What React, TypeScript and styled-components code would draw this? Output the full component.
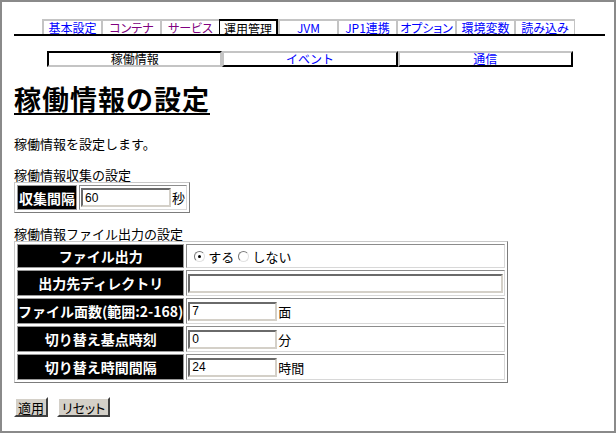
import React, { useState } from 'react';
import styled, { createGlobalStyle, css } from 'styled-components';

const GlobalStyle = createGlobalStyle`
  html, body {
    margin: 0;
    padding: 0;
    background: #fff;
  }
`;

const JP = `"Noto Sans CJK JP", "Liberation Sans", sans-serif`;

const Frame = styled.div`
  width: 616px;
  height: 433px;
  box-sizing: border-box;
  border: 2px solid #8a8a8a;
  padding: 17px 9px 0 12px;
  font-family: ${JP};
  font-size: 13px;
  color: #000;
  background: #fff;
`;

const TabBar = styled.div`
  display: flex;
  padding-left: 28px;
  height: 15px;
  border-bottom: 2px solid #000;
`;

const Tab = styled.a<{ $active?: boolean; $visited?: boolean }>`
  width: 59px;
  height: 15px;
  box-sizing: border-box;
  display: flex;
  align-items: center;
  justify-content: center;
  font-size: 12px;
  line-height: 1;
  white-space: nowrap;
  font-feature-settings: "palt";
  text-decoration: none;
  border-top: 2px solid #c4c4c4;
  border-left: 2px solid #c4c4c4;
  color: ${(p) => (p.$visited ? '#800080' : '#0000ff')};
  cursor: pointer;
  ${(p) =>
    p.$active &&
    css`
      color: #000;
      border-top-color: #000;
      border-left: 1px solid #000;
      border-right: 2px solid #000;
      height: 17px;
      margin-bottom: -2px;
    `}
  &:last-child {
    width: 61px;
    border-right: 1px solid #c4c4c4;
  }
`;

const SubTabBar = styled.div`
  display: flex;
  width: 526px;
  margin: 15px 0 0 33px;
`;

const SubTab = styled.a<{ $active?: boolean }>`
  flex: 1;
  height: 16px;
  box-sizing: border-box;
  display: flex;
  align-items: center;
  justify-content: center;
  font-size: 12px;
  line-height: 1;
  text-decoration: none;
  border: 2px solid;
  border-color: #c4c4c4 #000 #000 #c4c4c4;
  color: #0000ff;
  cursor: pointer;
  ${(p) =>
    p.$active &&
    css`
      color: #000;
      border-color: #000 #c4c4c4 #c4c4c4 #000;
    `}
`;

const Heading = styled.h1`
  margin: 16px 0 0;
  font-size: 27px;
  line-height: 32px;
  letter-spacing: 1px;
  font-weight: bold;
  text-decoration: underline;
  text-underline-offset: 3px;
`;

const Text = styled.p<{ $top: number }>`
  margin: ${(p) => p.$top}px 0 0;
  font-size: 13px;
  line-height: 14px;
`;

const FormTable = styled.table<{ $width?: number }>`
  border-collapse: separate;
  border-spacing: 2px;
  border: 1px solid;
  border-color: #c8c8c8 #7c7c7c #7c7c7c #c8c8c8;
  ${(p) => p.$width && `width: ${p.$width}px;`}
`;

const Label = styled.th<{ $width: number; $height: number }>`
  width: ${(p) => p.$width}px;
  height: ${(p) => p.$height}px;
  box-sizing: border-box;
  padding: 0;
  background: #000;
  color: #fff;
  font-size: 14px;
  font-weight: bold;
  white-space: nowrap;
  text-align: center;
  border: 1px solid #9a9a9a;
`;

const Cell = styled.td`
  padding: 1px 1px;
  border: 1px solid;
  border-color: #8c8c8c #d8d8d8 #d8d8d8 #8c8c8c;
  white-space: nowrap;
`;

const Field = styled.div`
  display: flex;
  align-items: center;
  gap: 1px;
`;

const TextInput = styled.input<{ $width: number }>`
  width: ${(p) => p.$width}px;
  height: 19px;
  box-sizing: border-box;
  padding: 0 2px;
  border: 2px solid;
  border-color: #6a6a6a #d4d0c8 #d4d0c8 #6a6a6a;
  font-family: "Liberation Sans", sans-serif;
  font-size: 12px;
  outline: none;
`;

const Unit = styled.span`
  font-size: 13px;
  line-height: 1;
`;

const RadioGroup = styled.div`
  display: flex;
  align-items: center;
  padding-left: 6px;
  font-size: 13px;
  height: 20px;
`;

const RadioOption = styled.label`
  display: flex;
  align-items: center;
  gap: 3px;
  margin-right: 4px;
  cursor: pointer;
`;

const RadioDot = styled.span<{ $checked: boolean }>`
  width: 11px;
  height: 11px;
  box-sizing: border-box;
  border-radius: 50%;
  border: 1px solid;
  border-color: #7a7a7a #e2e2e2 #e2e2e2 #7a7a7a;
  background: #fff;
  display: flex;
  align-items: center;
  justify-content: center;
  &::after {
    content: '';
    width: 3px;
    height: 3px;
    border-radius: 50%;
    background: ${(p) => (p.$checked ? '#000' : 'transparent')};
  }
`;

const ButtonRow = styled.div`
  display: flex;
  gap: 9px;
  margin-top: 14px;
`;

const Button = styled.button<{ $width: number }>`
  width: ${(p) => p.$width}px;
  height: 20px;
  box-sizing: border-box;
  padding: 0;
  background: #d4d0c8;
  border: 2px solid;
  border-color: #fff #404040 #404040 #fff;
  font-family: ${JP};
  font-size: 13px;
  line-height: 1;
  white-space: nowrap;
  font-feature-settings: "palt";
  color: #000;
  cursor: pointer;
`;

const tabs = [
  { label: '基本設定' },
  { label: 'コンテナ', visited: true },
  { label: 'サービス', visited: true },
  { label: '運用管理', active: true },
  { label: 'JVM' },
  { label: 'JP1連携' },
  { label: 'オプション' },
  { label: '環境変数' },
  { label: '読み込み' },
];

const subTabs = ['稼働情報', 'イベント', '通信'];

export default function App() {
  const [interval, setInterval] = useState('60');
  const [output, setOutput] = useState(true);
  const [dir, setDir] = useState('');
  const [files, setFiles] = useState('7');
  const [base, setBase] = useState('0');
  const [span, setSpan] = useState('24');

  return (
    <>
      <GlobalStyle />
      <Frame>
        <TabBar>
          {tabs.map((t) => (
            <Tab key={t.label} $active={t.active} $visited={t.visited}>
              {t.label}
            </Tab>
          ))}
        </TabBar>
        <SubTabBar>
          {subTabs.map((s, i) => (
            <SubTab key={s} $active={i === 0}>
              {s}
            </SubTab>
          ))}
        </SubTabBar>

        <Heading>稼働情報の設定</Heading>
        <Text $top={22}>稼働情報を設定します。</Text>

        <Text $top={17}>稼働情報収集の設定</Text>
        <FormTable>
          <tbody>
            <tr>
              <Label $width={60} $height={25}>収集間隔</Label>
              <Cell>
                <Field>
                  <TextInput $width={90} value={interval} onChange={(e) => setInterval(e.target.value)} />
                  <Unit>秒</Unit>
                </Field>
              </Cell>
            </tr>
          </tbody>
        </FormTable>

        <Text $top={14}>稼働情報ファイル出力の設定</Text>
        <FormTable $width={492}>
          <tbody>
            <tr>
              <Label $width={163} $height={24}>ファイル出力</Label>
              <Cell>
                <RadioGroup>
                  <RadioOption onClick={() => setOutput(true)}>
                    <RadioDot $checked={output} />
                    する
                  </RadioOption>
                  <RadioOption onClick={() => setOutput(false)}>
                    <RadioDot $checked={!output} />
                    しない
                  </RadioOption>
                </RadioGroup>
              </Cell>
            </tr>
            <tr>
              <Label $width={163} $height={26}>出力先ディレクトリ</Label>
              <Cell>
                <Field>
                  <TextInput $width={315} value={dir} onChange={(e) => setDir(e.target.value)} />
                </Field>
              </Cell>
            </tr>
            <tr>
              <Label $width={163} $height={26}>ファイル面数(範囲:2-168)</Label>
              <Cell>
                <Field>
                  <TextInput $width={89} value={files} onChange={(e) => setFiles(e.target.value)} />
                  <Unit>面</Unit>
                </Field>
              </Cell>
            </tr>
            <tr>
              <Label $width={163} $height={26}>切り替え基点時刻</Label>
              <Cell>
                <Field>
                  <TextInput $width={89} value={base} onChange={(e) => setBase(e.target.value)} />
                  <Unit>分</Unit>
                </Field>
              </Cell>
            </tr>
            <tr>
              <Label $width={163} $height={26}>切り替え時間間隔</Label>
              <Cell>
                <Field>
                  <TextInput $width={89} value={span} onChange={(e) => setSpan(e.target.value)} />
                  <Unit>時間</Unit>
                </Field>
              </Cell>
            </tr>
          </tbody>
        </FormTable>

        <ButtonRow>
          <Button $width={34}>適用</Button>
          <Button $width={53}>リセット</Button>
        </ButtonRow>
      </Frame>
    </>
  );
}
